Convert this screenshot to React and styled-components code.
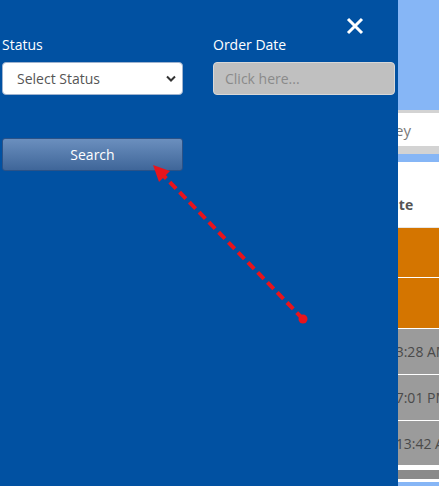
import React from "react";
import styled, { createGlobalStyle } from "styled-components";

const GlobalStyle = createGlobalStyle`
  html, body {
    margin: 0;
    padding: 0;
    overflow: hidden;
    font-family: "Open Sans", "Liberation Sans", sans-serif;
  }
`;

/* page underneath the drawer */
const Page = styled.div`
  width: 439px;
  height: 486px;
  overflow: hidden;
  background: #ffffff;
`;

const TopBar = styled.div`
  height: 110px;
  background: #86b6f6;
`;

const SearchWrap = styled.div`
  background: #d3d3d3;
  padding: 3px 0 8px;
`;

const SearchField = styled.div`
  height: 33px;
  background: #ffffff;
  display: flex;
  align-items: center;
  padding-left: 292px;
  font-size: 15px;
  color: #7a7a7a;
  white-space: nowrap;
  overflow: hidden;
`;

const Band = styled.div`
  height: ${p => p.$h}px;
  background: ${p => p.$bg};
`;

const Table = styled.div`
  display: flex;
  flex-direction: column;
  background: #ffffff;
`;

const Row = styled.div`
  display: grid;
  grid-template-columns: 190px 185px 1fr;
  align-items: center;
  height: ${p => p.$h}px;
  background: ${p => p.$bg || "#ffffff"};
  border-bottom: 1px solid ${p => p.$line || "#ffffff"};
  color: ${p => p.$color || "#555"};
  font-size: 14px;
  font-weight: ${p => (p.$head ? 700 : 400)};
`;

const HeadRow = styled(Row)`
  align-items: end;
  padding-bottom: 13px;
  box-sizing: border-box;
`;

const Cell = styled.div`
  padding-left: ${p => p.$pad || 0}px;
  white-space: nowrap;
  overflow: hidden;
`;

/* drawer */
const Drawer = styled.aside`
  position: fixed;
  left: 0;
  top: 0;
  width: 398px;
  height: 100vh;
  background: #0151a2;
  box-sizing: border-box;
  padding: 36px 3px 0 2px;
`;

const CloseButton = styled.button`
  position: absolute;
  top: 17px;
  right: 34px;
  width: 18px;
  height: 18px;
  padding: 0;
  border: 0;
  background: transparent;
  cursor: pointer;
  display: flex;
`;

const FormGrid = styled.div`
  display: grid;
  grid-template-columns: 181px 182px;
  column-gap: 30px;
`;

const Field = styled.div`
  display: flex;
  flex-direction: column;
`;

const Label = styled.label`
  color: #ffffff;
  font-size: 14px;
  line-height: 18px;
  margin-bottom: 8px;
`;

const SelectWrap = styled.div`
  position: relative;
`;

const Select = styled.select`
  appearance: none;
  width: 100%;
  height: 33px;
  border: 1px solid #9fb3cf;
  border-radius: 4px;
  background: #ffffff;
  font-family: inherit;
  font-size: 14px;
  color: #555;
  padding: 0 0 0 14px;
`;

const Chevron = styled.svg`
  position: absolute;
  right: 7px;
  top: 13px;
  pointer-events: none;
`;

const Input = styled.input`
  height: 33px;
  box-sizing: border-box;
  border: 1px solid #d8d8d8;
  border-radius: 4px;
  background: #c0c0c0;
  font-family: inherit;
  font-size: 14px;
  padding: 0 11px;
  &::placeholder {
    color: #8a8a8a;
  }
`;

const SearchButton = styled.button`
  margin-top: 43px;
  width: 181px;
  height: 33px;
  border: 1px solid #2b5287;
  border-radius: 3px;
  background: linear-gradient(#6b8fbe, #3f6699);
  color: #ffffff;
  font-family: inherit;
  font-size: 14px;
  cursor: pointer;
`;

const Annotation = styled.svg`
  position: fixed;
  left: 0;
  top: 0;
  pointer-events: none;
`;

const rows = [
  { bg: "#d47500", h: 49, text: "" },
  { bg: "#d47500", h: 50, text: "" },
  { bg: "#9b9b9b", h: 45, text: "9:53:28 AM" },
  { bg: "#9b9b9b", h: 45, text: "2:27:01 PM" },
  { bg: "#9b9b9b", h: 44, text: "11:13:42 AM" }
];

const App = () => (
  <>
    <GlobalStyle />
    <Page>
      <TopBar />
      <SearchWrap>
        <SearchField>Search by Survey</SearchField>
      </SearchWrap>
      <Band $h={8} $bg="#86b6f6" />
      <Table>
        <HeadRow $h={66} $line="#e6e6e6" $head $color="#555">
          <Cell $pad={10}>Survey</Cell>
          <Cell>Status</Cell>
          <Cell $pad={5}>Date</Cell>
        </HeadRow>
        {rows.map((r, i) => (
          <Row key={i} $h={r.h} $bg={r.bg} $color="#4a4a4a">
            <Cell />
            <Cell />
            <Cell $pad={1}>{r.text}</Cell>
          </Row>
        ))}
      </Table>
      <Band $h={4} $bg="#ffffff" />
      <Band $h={9} $bg="#8a8a8a" />
      <Band $h={3} $bg="#ffffff" />
      <Band $h={20} $bg="#86b6f6" />
    </Page>

    <Drawer>
      <CloseButton aria-label="Close">
        <svg width="18" height="18" viewBox="0 0 18 18">
          <path d="M2 2 L16 16 M16 2 L2 16" stroke="#ffffff" strokeWidth="3" />
        </svg>
      </CloseButton>
      <FormGrid>
        <Field>
          <Label>Status</Label>
          <SelectWrap>
            <Select defaultValue="">
              <option value="">Select Status</option>
              <option>Open</option>
              <option>Closed</option>
            </Select>
            <Chevron width="10" height="7" viewBox="0 0 10 7">
              <path d="M1 1.5 L5 5.5 L9 1.5" fill="none" stroke="#333" strokeWidth="2" />
            </Chevron>
          </SelectWrap>
        </Field>
        <Field>
          <Label>Order Date</Label>
          <Input placeholder="Click here..." />
        </Field>
      </FormGrid>
      <SearchButton>Search</SearchButton>
    </Drawer>

    <Annotation width="439" height="486" viewBox="0 0 439 486">
      <path
        d="M303 319 L161 173"
        stroke="#e8141c"
        strokeWidth="4"
        strokeDasharray="9 5"
        fill="none"
      />
      <path d="M153 165 L170 171 L159 182 Z" fill="#e8141c" />
      <circle cx="303" cy="319" r="4.5" fill="#e8141c" />
    </Annotation>
  </>
);

export default App;
